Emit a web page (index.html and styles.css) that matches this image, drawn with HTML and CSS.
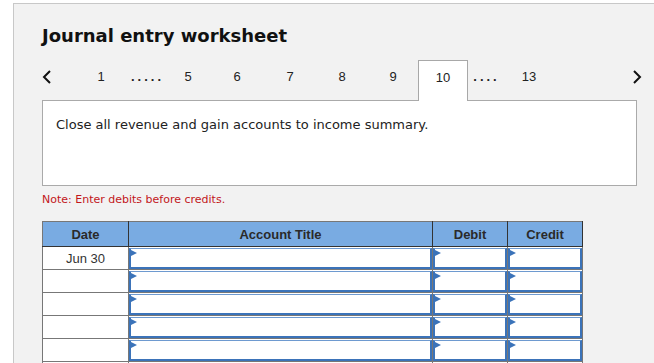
FILE: index.html
```html
<!DOCTYPE html>
<html lang="en">
<head>
  <meta charset="UTF-8">
  <title>Journal entry worksheet</title>
  <link rel="stylesheet" href="styles.css">
</head>
<body>
  <div class="panel">
    <h1>Journal entry worksheet</h1>
    <div class="tabs">
      <span class="arrow">
        <svg width="10" height="14" viewBox="0 0 10 14"><path d="M8 1 L2 7 L8 13" fill="none" stroke="#111" stroke-width="2"/></svg>
      </span>
      <span class="tab">1</span>
      <span class="dots">.....</span>
      <span class="tab">5</span>
      <span class="tab">6</span>
      <span class="tab">7</span>
      <span class="tab">8</span>
      <span class="tab">9</span>
      <span class="tab active">10</span>
      <span class="dots">....</span>
      <span class="tab">13</span>
      <span></span>
      <span class="arrow">
        <svg width="10" height="14" viewBox="0 0 10 14"><path d="M2 1 L8 7 L2 13" fill="none" stroke="#111" stroke-width="2"/></svg>
      </span>
    </div>
    <div class="desc">Close all revenue and gain accounts to income summary.</div>
    <div class="note">Note: Enter debits before credits.</div>
    <table class="entry">
      <thead>
        <tr>
          <th class="c-date">Date</th>
          <th class="c-title">Account Title</th>
          <th class="c-amt">Debit</th>
          <th class="c-amt">Credit</th>
        </tr>
      </thead>
      <tbody>
        <tr>
          <td class="date">Jun 30</td>
          <td><div class="field"></div></td>
          <td><div class="field"></div></td>
          <td><div class="field"></div></td>
        </tr>
        <tr>
          <td class="date"></td>
          <td><div class="field"></div></td>
          <td><div class="field"></div></td>
          <td><div class="field"></div></td>
        </tr>
        <tr>
          <td class="date"></td>
          <td><div class="field"></div></td>
          <td><div class="field"></div></td>
          <td><div class="field"></div></td>
        </tr>
        <tr>
          <td class="date"></td>
          <td><div class="field"></div></td>
          <td><div class="field"></div></td>
          <td><div class="field"></div></td>
        </tr>
        <tr>
          <td class="date"></td>
          <td><div class="field"></div></td>
          <td><div class="field"></div></td>
          <td><div class="field"></div></td>
        </tr>
        <tr>
          <td class="date"></td>
          <td><div class="field"></div></td>
          <td><div class="field"></div></td>
          <td><div class="field"></div></td>
        </tr>
      </tbody>
    </table>
  </div>
</body>
</html>
```

FILE: styles.css
```css
body {
  margin: 0;
  background: #fff;
  font-family: "DejaVu Sans", Verdana, sans-serif;
  overflow: hidden;
}

.panel {
  margin: 3px 0 0 13px;
  background: #f2f2f2;
  border-top: 1px solid #c8c8c8;
  border-left: 1px solid #c8c8c8;
  padding: 20px 0 0 28px;
  height: 400px;
}

h1 {
  margin: 0;
  font-size: 18px;
  font-weight: bold;
  color: #111;
  line-height: 24px;
}

.tabs {
  display: grid;
  grid-template-columns: 34px 50px 40px 44px 54px 52px 52px 50px 50px 34px 54px 76px 12px;
  margin-top: 12px;
  height: 40px;
  font-family: "Liberation Sans", Arial, sans-serif;
  font-size: 13px;
  color: #222;
}

.tabs span {
  line-height: 34px;
  text-align: center;
}

.tabs .arrow {
  text-align: left;
  padding-top: 10px;
  line-height: 14px;
}

.dots {
  font-weight: bold;
  letter-spacing: 3px;
  padding-left: 3px;
}

.tab.active {
  background: #fff;
  border: 1px solid #a8a8a8;
  border-bottom: none;
  line-height: 33px;
  position: relative;
  z-index: 1;
  margin-bottom: -1px;
}

.desc {
  width: 580px;
  height: 68px;
  background: #fff;
  border: 1px solid #aaa;
  padding: 16px 0 0 13px;
  font-size: 13px;
  color: #222;
}

.note {
  margin-top: 7px;
  font-size: 11px;
  color: #c2161b;
  line-height: 14px;
}

.entry {
  margin-top: 14px;
  border-collapse: collapse;
  font-family: "Liberation Sans", Arial, sans-serif;
  font-size: 13px;
}

.entry th {
  background: #79abe2;
  color: #2a2a2a;
  font-size: 13px;
  font-weight: bold;
  height: 24px;
  padding: 0;
  border: 1px solid #333;
  border-top-color: #777;
}

.entry th:first-child { border-left-color: #777; }

.c-date { width: 85px; }
.c-title { width: 303px; }
.c-amt { width: 74px; }

.entry td {
  height: 22px;
  padding: 0;
  border: 1px solid #777;
  background: #fff;
}

.entry td.date {
  text-align: center;
  color: #333;
  vertical-align: top;
  padding-top: 4px;
  height: 18px;
}

.field {
  position: relative;
  height: 18px;
  border: 2px solid #3b73b9;
  border-top: 1px solid #6e9ad0;
  background: #fff;
}

.field::before {
  content: "";
  position: absolute;
  left: 0;
  top: 1px;
  border-left: 6px solid #3b73b9;
  border-top: 3px solid transparent;
  border-bottom: 3px solid transparent;
}
```
